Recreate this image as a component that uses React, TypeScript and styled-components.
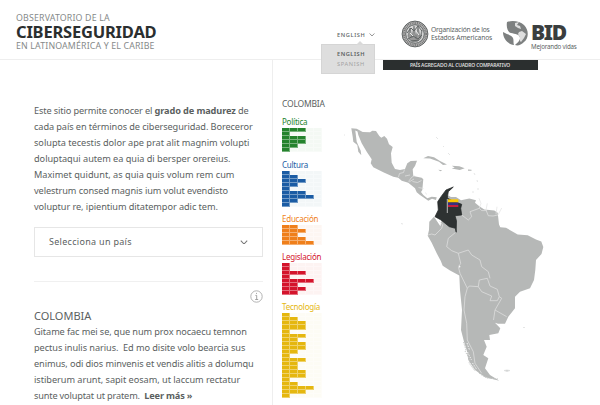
import React from 'react';
import styled, { createGlobalStyle } from 'styled-components';

const Global = createGlobalStyle`
  * { box-sizing: border-box; }
  body { margin: 0; background: #fff; overflow: hidden; }
`;

const Page = styled.div`
  width: 600px;
  height: 405px;
  overflow: hidden;
  display: flex;
  flex-direction: column;
  background: #fff;
  color: #5b5f5f;
  font-family: 'Noto Sans', 'Open Sans', sans-serif;
`;

const Header = styled.header`
  height: 60px;
  flex: none;
  display: flex;
  border-bottom: 1px solid #eeeeee;
`;

const Brand = styled.h1`
  width: 337px;
  margin: 0;
  padding: 13px 0 0 16px;
  font-weight: 400;
`;

const Line = styled.span<{ $size: number; $height: number; $track?: number; $weight?: number; $color?: string; $top?: number }>`
  display: block;
  white-space: pre;
  margin-top: ${p => p.$top ?? 0}px;
  font-size: ${p => p.$size}px;
  line-height: ${p => p.$height}px;
  letter-spacing: ${p => p.$track ?? 0}px;
  font-weight: ${p => p.$weight ?? 400};
  color: ${p => p.$color ?? 'inherit'};
`;

const Language = styled.nav`
  position: relative;
  width: 64px;
  padding-top: 30px;
`;

const Current = styled.div`
  display: flex;
  align-items: center;
  gap: 4px;
  height: 10px;
`;

const Menu = styled.div`
  position: absolute;
  z-index: 2;
  left: -16px;
  top: 44px;
  width: 54px;
  height: 30px;
  padding: 5px 0 0 15px;
  background: #dedede;
  border: 1px solid #d5d5d5;
  &::before {
    content: '';
    position: absolute;
    left: 34px;
    top: -4px;
    border: 4px solid transparent;
    border-top: 0;
    border-bottom-color: #d9d9d9;
  }
`;

const Partner = styled.div<{ $gap: number; $width: number; $top: number }>`
  display: flex;
  align-items: flex-start;
  gap: ${p => p.$gap}px;
  width: ${p => p.$width}px;
  padding-top: ${p => p.$top}px;
`;

const Content = styled.main`
  display: flex;
  flex: 1;
  min-height: 0;
`;

const Intro = styled.section`
  width: 273px;
  border-right: 1px solid #eeeeee;
  padding: 43px 9px 0 34px;
`;

const Select = styled.div`
  display: flex;
  align-items: center;
  justify-content: space-between;
  height: 30px;
  margin-top: 12px;
  padding: 0 14px 0 14px;
  border: 1px solid #e6e6e6;
`;

const InfoRow = styled.div`
  display: flex;
  justify-content: flex-end;
  height: 25px;
  margin-top: 24px;
  padding-top: 8px;
  border-top: 1px solid #f0f0f0;
`;

const Scores = styled.aside`
  width: 60px;
  padding: 37px 0 0 9px;
`;

const Score = styled.div<{ $gap: number }>`
  margin-top: ${p => p.$gap}px;
`;

const Grid = styled.div<{ $tint: string }>`
  width: 40px;
  background: ${p => p.$tint};
`;

const GridRow = styled.div`
  display: flex;
  height: 4.03px;
`;

const Cell = styled.i<{ $fill: string; $on: boolean }>`
  width: 8px;
  border: solid rgba(255, 255, 255, 0.38);
  border-width: 0 1px 1px 0;
  background: ${p => (p.$on ? p.$fill : 'transparent')};
`;

const MapPanel = styled.section`
  flex: 1;
`;

const Banner = styled.div`
  width: 155px;
  height: 10px;
  margin-left: 49.5px;
  display: flex;
  justify-content: center;
  background: #2b2f2f;
`;

const MapBox = styled.div`
  margin: 40px 0 0 7px;
  height: 285px;
  svg { display: block; }
`;

const Chevron = ({ w }: { w: number }) => (
  <svg width={w} height={w * 0.6} viewBox="0 0 10 6" fill="none" stroke="#777" strokeWidth="1.3">
    <path d="M1 .8 5 5 9 .8" />
  </svg>
);

const Seal = () => (
  <svg width="28" height="28" viewBox="0 0 28 28" fill="none">
    <circle cx="14" cy="14" r="12.9" fill="#b9b9b9" stroke="#606464" strokeWidth="1" />
    <circle cx="14" cy="14" r="11.1" stroke="#777" strokeWidth="2" strokeDasharray="1 .8" />
    <circle cx="14" cy="14" r="9.3" fill="#d6d6d6" stroke="#555959" strokeWidth=".9" />
    <path d="M7 16 9 8l2 10 2-12 2 13 2-12 2 11 2-8-1 8-3 3-4 1-4-2Z" fill="#999" stroke="#777b7b" strokeWidth=".8" />
    <path d="m6 13 4-5 3 3 4-5 4 5M7 19l5-3 5 3 4-4M10 21l8-1" stroke="#606464" strokeWidth="1" />
    <path d="m9 13 3 3m3-5 3 4" stroke="#eee" />
  </svg>
);

const Globe = () => (
  <svg width="27" height="25" viewBox="0 0 27 25">
    <path d="M5 1C10-1 18 0 22 4c5 5 5 13 0 17-3 3-6 4-9 3 2-2 5-4 5-7 0-4-5-4-9-5-3-1-5-5-4-11Z" fill="#7d8080" />
    <path d="M1 11c5 3 9 3 10 6 1 2 0 5 1 7-6-1-11-6-11-13Z" fill="#7d8080" />
    <path d="m13 2 4-1-2 3 3 1 1 3-3-1-3-2Zm4 9 3-1 4 3-2 4-3 4-1-1 0-4-2-3Z" fill="#dedede" />
  </svg>
);

const Info = () => (
  <svg width="13" height="13" viewBox="0 0 13 13" fill="none" stroke="#aaa">
    <circle cx="6.5" cy="6.5" r="5.7" strokeWidth=".9" />
    <path d="M5.4 5.4h1.3v4M5.2 9.5h3M6 3.4h1" stroke="#999" strokeWidth=".9" />
  </svg>
);

const intro: [React.ReactNode, number][] = [
  [<>Este sitio permite conocer el <b>grado de madurez</b> de</>, -0.12],
  ['cada país en términos de ciberseguridad. Boreceror', -0.09],
  ['solupta tecestis dolor ape prat alit magnim volupti', -0.03],
  ['doluptaqui autem ea quia di bersper orereius.', -0.04],
  ['Maximet quidunt, as quia quis volum rem cum', 0],
  ['velestrum consed magnis ium volut evendisto', -0.09],
  ['voluptur re, ipientium ditatempor adic tem.', -0.07],
];

const detail: [React.ReactNode, number][] = [
  ['Gitame fac mei se, que num prox nocaecu temnon', -0.1],
  ['pectus inulis narius.  Ed mo disite volo bearcia sus', -0.07],
  ['enimus, odi dios minvenis et vendis alitis a dolumqu', -0.1],
  ['istiberum arunt, sapit eosam, ut laccum rectatur', -0.04],
  [<>sunte voluptat ut pratem.  <b>Leer más »</b></>, -0.17],
];

const scores = [
  { name: 'Política', color: '#25832d', tint: '#f4f9f4', gap: 6, rows: [3, 1, 3, 3, 2, 1] },
  { name: 'Cultura', color: '#1b5ca4', tint: '#f3f7f8', gap: 7, rows: [1, 2, 3, 2, 1, 3, 4, 2, 1] },
  { name: 'Educación', color: '#ef7f1b', tint: '#fdf6f2', gap: 6, rows: [2, 3, 2, 3, 4] },
  { name: 'Legislación', color: '#d4142c', tint: '#fdf3f2', gap: 6, rows: [1, 1, 3, 1, 4, 2, 3, 2] },
  { name: 'Tecnología', color: '#e5b70f', tint: '#fdfcf5', gap: 6,
    rows: [1, 2, 3, 3, 1, 3, 2, 3, 3, 2, 1, 3, 2, 2, 3, 3, 1, 2, 4, 3, 1] },
];

const CountryMap = () => (
  <svg width="210" height="280" viewBox="340 110 210 280" fill="#b6b8b7" strokeLinejoin="round">
    <path d="M351.3 128.3 356.7 128.7 362.7 132 370 132.3 372.3 130.7 376 131 379.3 136 381.3 137.7 384.3 136 387 138.7 389 144.3 392.7 147 391 153.3 391.7 162.7 395 169 400 170 405 169 407.3 163.3 410.7 161 417 160.7 415 166 412.7 169.3 413.3 176 421.7 177.7 423.3 179.3 422.3 190 421 192 423.3 195 427.3 198.3 431.7 196.7 436.7 197.3 436 200 432 198.7 428.3 200.7 420 195 416.7 192.3 415 188.3 408.3 182.7 401.7 180.7 398.3 177.7 393.3 176.7 383.3 172.3 373.3 167.3 370.7 163.3 371.7 159.3 366.7 151.7 361.7 143.3 358.3 135 357.5 131.5 355.3 130.5 356.7 141.7 360.7 150.7 361.3 155.3 358.3 151.7 357.3 145 353.3 141.7 352.7 136.7Z" />
    <path d="M423.3 158.3 428 156 434 157.3 440 161 447 164.4 443 165 439 161.8 430 158.5Zm28.4 7.4 7.6.6 5.4 2-5 1.7-8-1.5 3-1Zm-13.4 4 4 .5-2 1Zm29.7-.2 3.5.2v1h-3.5Z" />
    <path d="m434 216.7-4.7 5-.3 8.3-1.3 5.7 4 7 5 10.6 4 7.4 2 5 7.3 4.8 9.3 5.1.7 14.4 2 20-1 20 3 11.7 2.7 8.3 1.6 10 6.7 10 10 7.3 14.3 3.4-9.3-5.7-5-6.7 3.3-10-5-3.3 3.4-8.3-2.7-6.7h6l-.7-5 9-1.7 2-5-5.3-5.6 3 1h7l3.3-7 6.7-8.4v-11.6l5-5 10-3.4 4-8.3 1.3-10 .7-10 5.5-6 1.8-7-2-5.5-5.3-2-8.3-4.3-10-.7-11.7-6.7-5.7-.6-1.3-2.7-1.3-11.7-3.4-2.3-10-1-5-3.3-4.3-3.4 1-2.6-6.7-1.7-8.3 1.7-5-3.3h-5l-3.3-1.7-2.3 5-5 26Z" />
    <g fill="none" stroke="#e2e3e2" strokeWidth=".7">
      <path d="m398.5 177 1-3.5 4-1 1-3m4 12 3-4 3-2m-2 6 5 1 4-2m-3 7 5 1m2 4 1 2M409 182l5-3M405 176l5-1" />
      <path d="M428 235l3.7-1 3.3 1 6.7-6.7 1-3.3-3.7-4M461.7 215l6.6 5 3.4-3.3-1.7-5 9.3-3.4M479 198.3l2 5-1.7 5 2.4 2.3 5 0M487.3 203.3 486 210l2.3 5.7 4.7.3 5-1 3.7-7M497 206.7l-1 7.6" />
      <path d="M455.7 232.3 448.3 238.3 446.7 246.7 451.7 250.7 458.3 253.3 468.3 250 471.7 255 480 260 481.7 266.7 488.3 271.7 490 278.3M458.3 253.3l2.4 10-2.2 4 1.5 6 7.3 15 2-2.3 9 .7 1-6.7 8-1.7 2.7 7.7 7.3 3.3 2 7.4-2 4H490l1.7-4.7-10-4.3-3.4-5M499.3 296.7l2.4 1.6L495 310l-1.5 10M495 310l11.7 6.7M467.3 288.3 465 296.7 464 310l2.7 13.3.6 16.7 6 11.7 1.7 11.6 6.7 10" />
    </g>
    <path d="m463.5 342 2.5 8-1 1 5 9-1 3 6 8m-4-7 9 10 7 4 11 1" fill="none" stroke="#c8cac9" strokeWidth="1" strokeDasharray="1.4 1" />
    <path d="m467 343 2.5 7m-2 2 4 8m1 3 4 6" fill="none" stroke="#f4f4f4" strokeWidth="1" strokeDasharray="1.5 1.2" />
    <path d="m458.5 265.5 2 1-.7 1.5Z" fill="#fff" />
    <path d="m453.3 187-5 4.7-1 6.3 5.4 3 9 3.3-1 4 1 6.7-6.7.7 1.5 5-.3 11.6-.9-4-6-1.6-8.3-6.7-6-3.3 3.3-6.7-.6-8.3 3.3-5 5-6.7Z" fill="#2e3232" stroke="#222727" strokeWidth=".7" />
    <path d="M447.3 199v14" stroke="#bababa" strokeWidth="1" />
    <path d="M448 199.3h10.3v3.2h-10.3z" fill="#ffc900" />
    <path d="M448 202.5h10.3v2.5h-10.3z" fill="#373080" />
    <path d="M448 205h10.3v2h-10.3z" fill="#c31e3d" />
    <path d="M401 223.5l2 .5M504 370.5l3-.5 3 .5-3 1ZM523 327.5h2M443 146l1 1M436 137l2 2M448 153l2 2M474 173l1 2M477 180l.5 2M478 188v2M344 135h1M472 192l2 0" stroke="#dedfdf" strokeWidth=".8" fill="#c6c8c7" />
  </svg>
);

export default function App() {
  return (
    <Page>
      <Global />
      <Header>
        <Brand>
          <Line $size={8.8} $height={10} $track={0.17} $color="#858989">OBSERVATORIO DE LA</Line>
          <Line $size={16.5} $height={18} $track={-0.2} $weight={700} $color="#2b2f2f">CIBERSEGURIDAD</Line>
          <Line $size={8.8} $height={10} $track={0.15} $color="#858989">EN LATINOAMÉRICA Y EL CARIBE</Line>
        </Brand>
        <Language>
          <Current>
            <Line $size={5.7} $height={10} $track={0.6} $weight={500}>ENGLISH</Line>
            <Chevron w={6} />
          </Current>
          <Menu>
            <Line $size={5.7} $height={8} $track={0.5} $weight={600}>ENGLISH</Line>
            <Line $size={5.7} $height={8} $top={2} $track={0.6} $color="#a3a3a3">SPANISH</Line>
          </Menu>
        </Language>
        <Partner $gap={2} $width={101} $top={20}>
          <Seal />
          <div>
            <Line $size={6.7} $height={8} $top={6} $track={-0.18}>Organización de los</Line>
            <Line $size={6.7} $height={8} $track={-0.12}>Estados Americanos</Line>
          </div>
        </Partner>
        <Partner $gap={2} $width={90} $top={21}>
          <Globe />
          <div>
            <Line $size={21} $height={21} $weight={900} $top={1} $track={-1.3} $color="#3a3e3e">BID</Line>
            <Line $size={6.2} $height={8} $track={-0.18}>Mejorando vidas</Line>
          </div>
        </Partner>
      </Header>
      <Content>
        <Intro>
          {intro.map(([text, track], i) => (
            <Line key={i} $size={9.2} $height={16} $track={track}>{text}</Line>
          ))}
          <Select>
            <Line $size={9} $height={16} $track={0.3}>Selecciona un país</Line>
            <Chevron w={8} />
          </Select>
          <InfoRow><Info /></InfoRow>
          <Line $size={11} $height={16} $top={2}>COLOMBIA</Line>
          {detail.map(([text, track], i) => (
            <Line key={i} $size={9.2} $height={16} $track={track}>{text}</Line>
          ))}
        </Intro>
        <Scores>
          <Line $size={8.5} $height={13} $track={-0.2}>COLOMBIA</Line>
          {scores.map(s => (
            <Score key={s.name} $gap={s.gap}>
              <Line $size={8} $height={12} $track={-0.23} $color={s.color}>{s.name}</Line>
              <Grid $tint={s.tint}>
                {s.rows.map((count, r) => (
                  <GridRow key={r}>
                    {[0, 1, 2, 3, 4].map(c => <Cell key={c} $fill={s.color} $on={c < count} />)}
                  </GridRow>
                ))}
              </Grid>
            </Score>
          ))}
        </Scores>
        <MapPanel>
          <Banner><Line $size={5} $height={10} $track={-0.18} $weight={600} $color="#ddd">PAÍS AGREGADO AL CUADRO COMPARATIVO</Line></Banner>
          <MapBox><CountryMap /></MapBox>
        </MapPanel>
      </Content>
    </Page>
  );
}
